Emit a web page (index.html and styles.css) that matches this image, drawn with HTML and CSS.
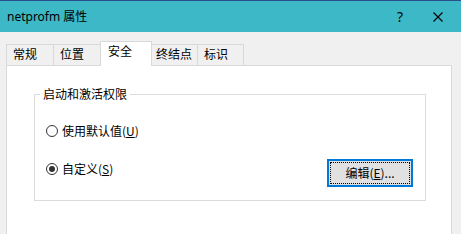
FILE: index.html
```html
<!DOCTYPE html>
<html lang="zh-CN">
<head>
<meta charset="utf-8">
<title>netprofm 属性</title>
<link rel="stylesheet" href="styles.css">
</head>
<body>
<div class="window">
  <div class="titlebar">
    <span class="title">netprofm 属性</span>
    <span class="help">?</span>
    <span class="close">
      <svg width="10" height="10" viewBox="0 0 10 10"><path d="M0.5 0.5 L9.5 9.5 M9.5 0.5 L0.5 9.5" stroke="#000" stroke-width="1.1" fill="none"/></svg>
    </span>
  </div>
  <div class="tabs">
    <div class="tab tab-general">常规</div>
    <div class="tab tab-location">位置</div>
    <div class="tab tab-security selected">安全</div>
    <div class="tab tab-endpoint">终结点</div>
    <div class="tab tab-identity">标识</div>
  </div>
  <div class="panel">
    <fieldset class="group">
      <legend>启动和激活权限</legend>
      <div class="group-body">
        <label class="radio-row">
          <span class="radio"></span>
          <span>使用默认值(<u>U</u>)</span>
        </label>
        <div class="row2">
          <label class="radio-row second">
            <span class="radio checked"></span>
            <span>自定义(<u>S</u>)</span>
          </label>
          <div class="button"><div class="focus">编辑(<u>E</u>)...</div></div>
        </div>
      </div>
    </fieldset>
  </div>
</div>
</body>
</html>
```
FILE: styles.css
```css
html, body {
  margin: 0;
  padding: 0;
  width: 461px;
  height: 234px;
  overflow: hidden;
  background: #f0f0f0;
}
body {
  font-family: "Noto Sans", "Noto Sans CJK SC", sans-serif;
  font-size: 12px;
  color: #000;
}
.window {
  height: 234px;
  display: flex;
  flex-direction: column;
}
.titlebar {
  box-sizing: border-box;
  height: 32px;
  flex: none;
  background: #3cb8c7;
  border-top: 1px solid #2d4e8c;
  display: flex;
  align-items: center;
}
.title {
  flex: 1;
  padding-left: 7px;
  font-size: 12px;
  line-height: 16px;
  font-family: "Noto Sans", "Noto Sans CJK SC", sans-serif;
}
.help {
  width: 30px;
  text-align: center;
  font-size: 14px;
  line-height: 16px;
}
.close {
  width: 46px;
  display: flex;
  justify-content: center;
  align-items: center;
}
.close svg { display: block; }
.tabs {
  flex: none;
  margin-top: 9px;
  margin-left: 6px;
  height: 24px;
  display: flex;
  align-items: flex-end;
}
.tab {
  box-sizing: border-box;
  height: 21px;
  border: 1px solid #d9d9d9;
  border-bottom: none;
  background: #f0f0f0;
  line-height: 18px;
  font-family: "Noto Sans CJK SC", sans-serif;
  margin-left: -1px;
}
.tab:first-child { margin-left: 0; }
.tab.selected {
  position: relative;
  z-index: 1;
  height: 25px;
  margin-bottom: -1px;
  background: #fff;
  line-height: 18px;
}
.tab-general { width: 48px; padding-left: 6px; }
.tab-location { width: 48px; padding-left: 6px; }
.tab-security { width: 52px; padding-left: 7px; }
.tab-endpoint { width: 47px; padding-left: 4px; }
.tab-identity { width: 47px; padding-left: 6px; }
.panel {
  flex: 1;
  margin: 0 9px 0 6px;
  background: #fff;
  border: 1px solid #d9d9d9;
  border-bottom: none;
  padding: 20px 25px 0 27px;
}
.group {
  margin: 0;
  border: 1px solid #dcdcdc;
  padding: 0 12px 13px 5px;
  font-family: "Noto Sans CJK SC", sans-serif;
}
.group legend {
  padding: 0 3px;
  line-height: 16px;
}
.group-body {
  padding-left: 6px;
  padding-top: 21px;
}
.radio-row {
  display: flex;
  align-items: center;
  gap: 4px;
  height: 16px;
  line-height: 16px;
}
.radio {
  box-sizing: border-box;
  width: 12px;
  height: 12px;
  border: 1px solid #333;
  border-radius: 50%;
  background: #fff;
  display: flex;
  align-items: center;
  justify-content: center;
}
.radio.checked::after {
  content: "";
  width: 6px;
  height: 6px;
  border-radius: 50%;
  background: #333;
}
.row2 {
  margin-top: 20px;
  display: flex;
  justify-content: space-between;
  align-items: flex-start;
}
.radio-row.second { margin-top: 2px; }
.button {
  box-sizing: border-box;
  width: 86px;
  height: 28px;
  border: 2px solid #0078d7;
  background: #e1e1e1;
  padding: 1px;
}
.focus {
  box-sizing: border-box;
  height: 100%;
  border: 1px dotted #000;
  display: flex;
  align-items: center;
  justify-content: center;
  line-height: 16px;
}
u { text-underline-offset: 1px; }
```
